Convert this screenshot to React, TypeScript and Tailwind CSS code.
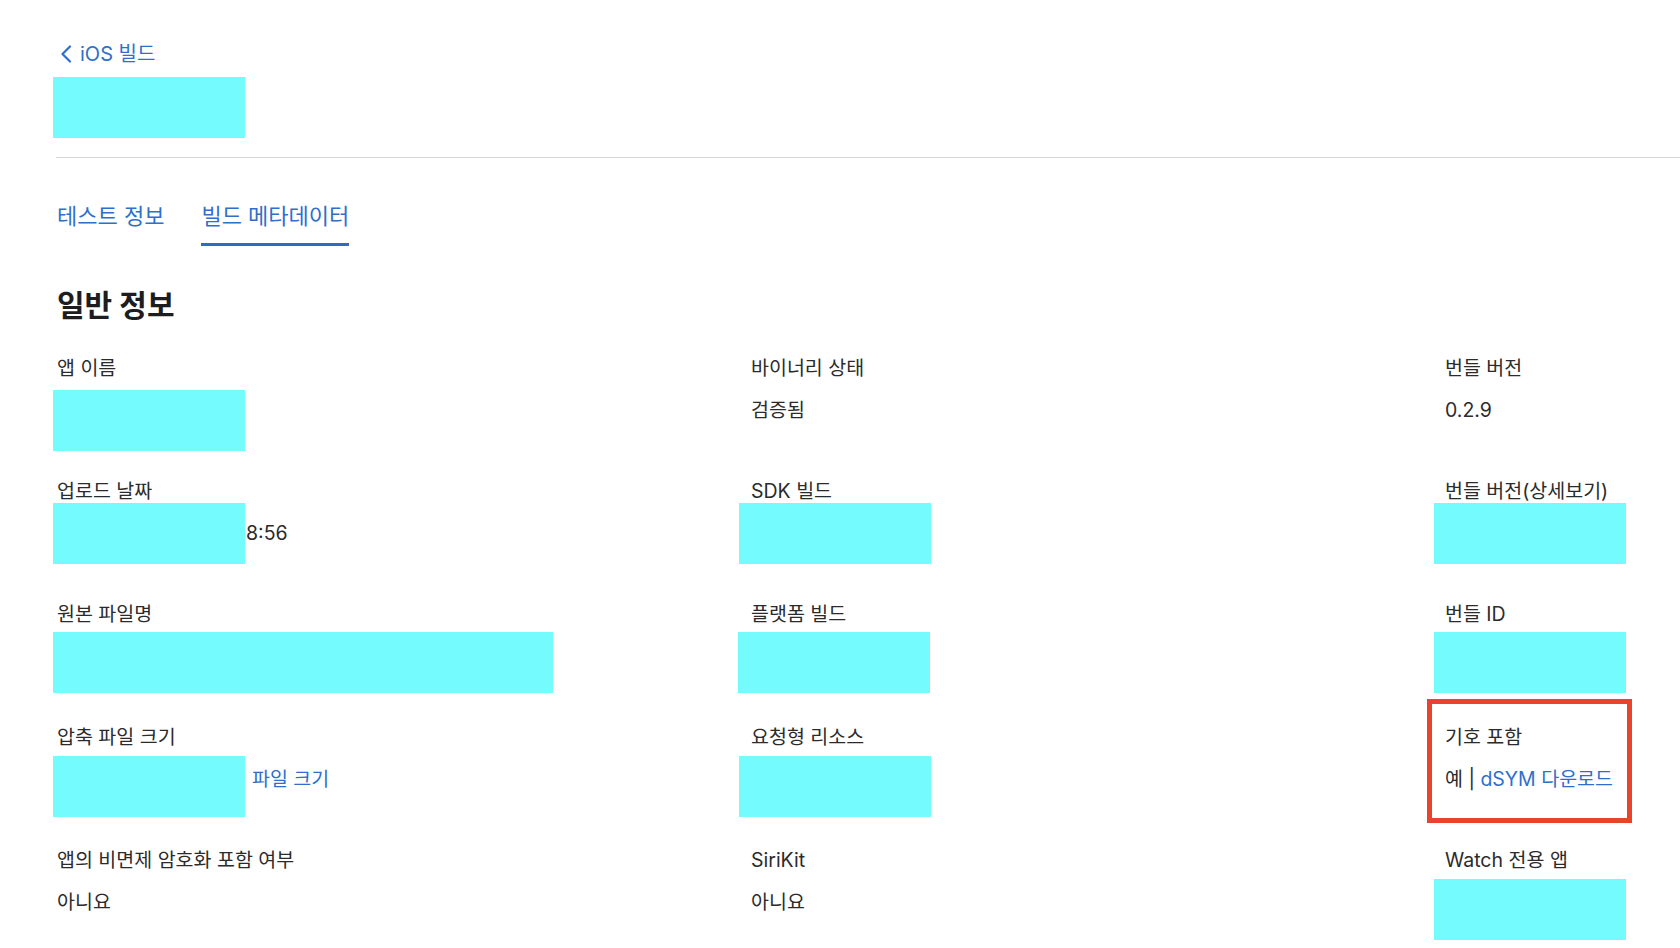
import type { ReactNode } from "react";

type Field = {
  label: string;
  value?: ReactNode;
  // redaction block laid over the value
  redact?: string;
  boxed?: boolean;
};

const link = "text-[#2f6fcb]";

const fields: Field[] = [
  { label: "앱 이름", redact: "left-[-4px] top-[35.5px] w-[192px]" },
  { label: "바이너리 상태", value: "검증됨" },
  { label: "번들 버전", value: "0.2.9" },

  { label: "업로드 날짜", value: <span className="pl-[189px]">8:56</span>, redact: "left-[-4px] top-[25.5px] w-[192px]" },
  { label: "SDK 빌드", redact: "left-[-12px] top-[25.5px] w-[192px]" },
  { label: "번들 버전(상세보기)", redact: "left-[-11px] top-[25.5px] w-[192px]" },

  { label: "원본 파일명", redact: "left-[-4px] top-[31.5px] w-[500px]" },
  { label: "플랫폼 빌드", redact: "left-[-13px] top-[31.5px] w-[192px]" },
  { label: "번들 ID", redact: "left-[-11px] top-[31.5px] w-[192px]" },

  {
    label: "압축 파일 크기",
    value: <span className={`pl-[195px] ${link}`}>파일 크기</span>,
    redact: "left-[-4px] top-[32.5px] w-[192px]",
  },
  { label: "요청형 리소스", redact: "left-[-12px] top-[32.5px] w-[192px]" },
  {
    label: "기호 포함",
    value: (
      <>
        예 | <span className={link}>dSYM 다운로드</span>
      </>
    ),
    boxed: true,
  },

  { label: "앱의 비면제 암호화 포함 여부", value: "아니요" },
  { label: "SiriKit", value: "아니요" },
  { label: "Watch 전용 앱", redact: "left-[-11px] top-[32.5px] w-[192px]" },
];

function FieldCell({ field }: { field: Field }) {
  return (
    <div className="relative pt-[2px] text-[19.5px] leading-[24px] text-[#2b2b2b]">
      <div>{field.label}</div>
      {field.value && <div className="mt-[18px]">{field.value}</div>}
      {field.redact && <div className={`absolute h-[61px] bg-[#73fbfd] ${field.redact}`} />}
      {field.boxed && (
        <div className="absolute left-[-18px] top-[-24.5px] h-[124px] w-[205px] border-[5px] border-[#e8432d]" />
      )}
    </div>
  );
}

export default function App() {
  return (
    <div className="min-h-screen overflow-hidden bg-white pl-[57px] pt-[42px] font-[Inter,'Noto_Sans_CJK_KR',sans-serif]">
      {/* Back link */}
      <a className={`flex items-center gap-[8px] text-[20px] leading-[24px] ${link}`}>
        <svg width="12" height="18" viewBox="0 0 12 18" fill="none" className="ml-[3px]">
          <path d="M10 1.5L2.5 9L10 16.5" stroke="currentColor" strokeWidth="2.2" strokeLinecap="round" strokeLinejoin="round" />
        </svg>
        <span>iOS 빌드</span>
      </a>

      {/* Title (redacted) */}
      <div className="ml-[-4px] mt-[11px] h-[61px] w-[192px] bg-[#73fbfd]" />

      <div className="ml-[-1px] mt-[19px] h-px bg-[#d6d6d6]" />

      {/* Tabs */}
      <div className="mt-[42px] flex gap-[37px] text-[22px] leading-[28px]">
        <div className={`border-b-[3px] border-transparent pb-[13px] pt-[2px] ${link}`}>테스트 정보</div>
        <div className={`border-b-[3px] border-[#2f6bc6] pb-[13px] pt-[2px] ${link}`}>빌드 메타데이터</div>
      </div>

      <h2 className="mt-[41px] text-[30px] font-bold leading-[36px] text-[#1d1d1f]">일반 정보</h2>

      <div className="mt-[31px] grid auto-rows-[123px] grid-cols-[694px_694px_694px]">
        {fields.map((f) => (
          <FieldCell key={f.label} field={f} />
        ))}
      </div>
    </div>
  );
}
